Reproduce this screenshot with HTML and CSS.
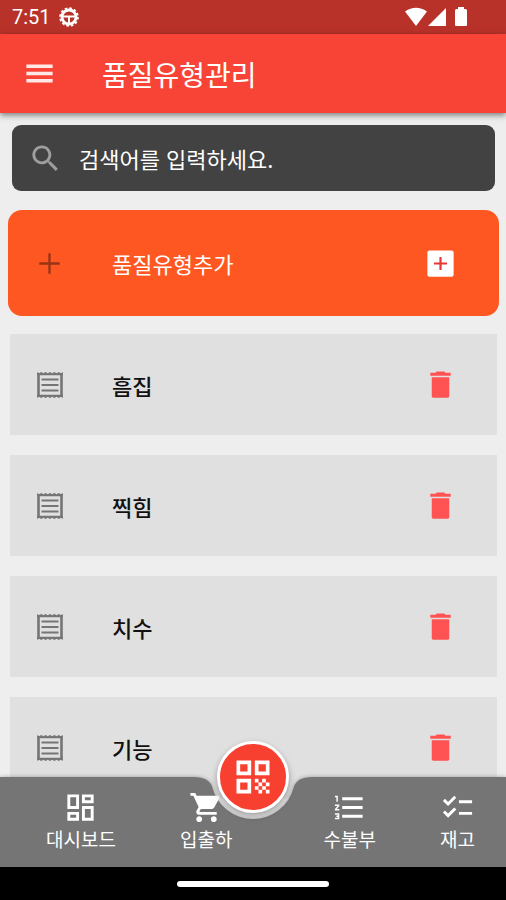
FILE: index.html
```html
<!DOCTYPE html>
<html lang="ko">
<head>
<meta charset="utf-8">
<meta name="viewport" content="width=device-width, initial-scale=1">
<title>품질유형관리</title>
<link rel="stylesheet" href="styles.css">
</head>
<body>
<svg class="defs" aria-hidden="true">
  <symbol id="receipt" viewBox="0 0 26 28">
    <path d="M1.500 2V26M24.500 2V26" fill="none" stroke="currentColor" stroke-width="2.600"/>
    <path d="M0.200 1l2 1.200 2-1.200 2.200 1.200L8.600 1l2.200 1.200L13 1l2.200 1.200L17.400 1l2.200 1.200L21.800 1l2 1.200L25.800 1v3.300H.2zM.2 27l2-1.200 2 1.200 2.200-1.200L8.600 27l2.200-1.200L13 27l2.200-1.200L17.400 27l2.200-1.200L21.800 27l2-1.200L25.800 27v-3.300H.2z"/>
    <path d="M4.500 8.500h17M4.500 14h17M4.500 19.500h17" fill="none" stroke="currentColor" stroke-width="2.200"/>
  </symbol>
  <symbol id="trash" viewBox="0 0 24 24">
    <path d="M6 20c0 .6.400 1 1 1h10c.6 0 1-.4 1-1V7H6v13zM19 4h-3.500l-1-1h-5l-1 1H5v2h14V4z"/>
  </symbol>
</svg>
<div class="screen">
  <div class="status">
    <span class="time">7:51</span>
    <svg class="wheel" viewBox="0 0 20 20" aria-hidden="true">
      <circle cx="10" cy="10" r="7" fill="none" stroke="currentColor" stroke-width="2.800"/>
      <circle cx="10" cy="10" r="8.900" fill="none" stroke="currentColor" stroke-width="1.800" stroke-dasharray="2.660 2"/>
      <path d="M3 9.500h14M10 10v7" stroke="currentColor" stroke-width="2"/>
    </svg>
    <svg class="signals" viewBox="0 0 66 20" aria-hidden="true">
      <path d="M1 4.500Q12 -3 23 4.500L12 19zM24 19L42 1V19zM51 3.500q0-1.500 1.500-1.500H54V0h6v2h1.500q1.500 0 1.500 1.500V18q0 1-1 1H52q-1 0-1-1z"/>
    </svg>
  </div>
  <header class="appbar">
    <button class="icon-btn" type="button" aria-label="메뉴"><svg class="icon" viewBox="0 0 24 24"><path d="M3 18.200h18v-2.400H3v2.400zm0-5h18v-2.400H3v2.400zm0-7.400v2.400h18V5.800H3z"/></svg></button>
    <h1>품질유형관리</h1>
  </header>
  <main>
    <label class="search">
      <svg class="icon" viewBox="0 0 24 24" aria-hidden="true"><path d="M15.500 14h-.79l-.28-.27C15.410 12.590 16 11.110 16 9.500 16 5.910 13.090 3 9.500 3S3 5.910 3 9.500 5.910 16 9.500 16c1.610 0 3.090-.59 4.230-1.570l.27.28v.79l5 4.990L20.490 19l-4.990-5zm-6 0C7.010 14 5 11.990 5 9.500S7.010 5 9.500 5 14 7.010 14 9.500 11.990 14 9.500 14z"/></svg>
      <input type="text" placeholder="검색어를 입력하세요." aria-label="검색어">
    </label>
    <button class="add" type="button">
      <svg class="icon lead" viewBox="0 0 24 24" aria-hidden="true"><path d="M19 12.800h-6.200V19h-1.600v-6.200H5v-1.600h6.200V5h1.600v6.200H19z"/></svg>
      <span class="name">품질유형추가</span>
      <svg class="icon" viewBox="0 0 24 24" aria-hidden="true"><rect x="3" y="3" width="18" height="18" rx="1.500"/><path class="plus" d="M7.500 12h9M12 7.500v9"/></svg>
    </button>
    <ul class="list">
      <li class="row"><svg class="receipt" aria-hidden="true"><use href="#receipt"/></svg><span class="name">흠집</span><button class="icon-btn delete" type="button" aria-label="흠집 삭제"><svg class="icon"><use href="#trash"/></svg></button></li>
      <li class="row"><svg class="receipt" aria-hidden="true"><use href="#receipt"/></svg><span class="name">찍힘</span><button class="icon-btn delete" type="button" aria-label="찍힘 삭제"><svg class="icon"><use href="#trash"/></svg></button></li>
      <li class="row"><svg class="receipt" aria-hidden="true"><use href="#receipt"/></svg><span class="name">치수</span><button class="icon-btn delete" type="button" aria-label="치수 삭제"><svg class="icon"><use href="#trash"/></svg></button></li>
      <li class="row"><svg class="receipt" aria-hidden="true"><use href="#receipt"/></svg><span class="name">기능</span><button class="icon-btn delete" type="button" aria-label="기능 삭제"><svg class="icon"><use href="#trash"/></svg></button></li>
    </ul>
  </main>
  <nav class="bottom">
    <div class="backdrop">
      <div class="fill"></div>
      <svg class="notch" viewBox="0 0 118 90" aria-hidden="true"><path d="M0 0Q15 0 18.200 10A42 42 0 0 0 99.800 10Q103 0 118 0V90H0z"/></svg>
      <div class="fill"></div>
    </div>
    <div class="group">
      <a href="#dashboard"><svg class="icon" viewBox="0 0 24 24" aria-hidden="true"><path d="M19 5v2h-4V5h4M9 5v6H5V5h4m10 8v6h-4v-6h4M9 17v2H5v-2h4M21 3h-8v6h8V3zM11 3H3v10h8V3zm10 8h-8v10h8V11zm-10 4H3v6h8v-6z"/></svg>대시보드</a>
      <a href="#inout"><svg class="icon" viewBox="0 0 24 24" aria-hidden="true"><path d="M7 18c-1.100 0-1.990.9-1.990 2S5.900 22 7 22s2-.9 2-2-.9-2-2-2zM1 2v2h2l3.600 7.590-1.350 2.450c-.16.28-.25.61-.25.96 0 1.100.9 2 2 2h12v-2H7.420c-.14 0-.25-.11-.25-.25l.03-.12.9-1.630h7.450c.75 0 1.410-.41 1.750-1.030l3.580-6.490c.08-.14.12-.31.12-.48 0-.55-.45-1-1-1H5.210l-.94-2H1zm16 16c-1.100 0-1.990.9-1.990 2s.89 2 1.990 2 2-.9 2-2-.9-2-2-2z"/></svg>입출하</a>
    </div>
    <div class="group">
      <a href="#ledger"><svg class="icon" viewBox="0 0 24 24" aria-hidden="true"><path d="M2 17h2v.5H3v1h1v.5H2v1h3v-4H2v1zm1-9h1V4H2v1h1v3zm-1 3h1.800L2 13.100v.9h3v-1H3.200L5 10.900V10H2v1zm5-6v2h14V5H7zm0 14h14v-2H7v2zm0-6h14v-2H7v2z"/></svg>수불부</a>
      <a href="#stock"><svg class="icon" viewBox="0 0 24 24" aria-hidden="true"><path d="M22 7h-9v2h9V7zm0 8h-9v2h9v-2zM5.540 11L2 7.460l1.410-1.410 2.120 2.120 4.240-4.240 1.410 1.410L5.540 11zm0 8L2 15.460l1.410-1.410 2.120 2.120 4.240-4.240 1.410 1.410L5.540 19z"/></svg>재고</a>
    </div>
    <button class="fab" type="button" aria-label="QR 스캔"><svg viewBox="0 0 24 24"><path d="M3 11h8V3H3v8zm2-6h4v4H5V5zM3 21h8v-8H3v8zm2-6h4v4H5v-4zM13 3v8h8V3h-8zm6 6h-4V5h4v4zM19 19h2v2h-2zM13 13h2v2h-2zM15 15h2v2h-2zM13 17h2v2h-2zM15 19h2v2h-2zM17 17h2v2h-2zM17 13h2v2h-2zM19 15h2v2h-2z"/></svg></button>
  </nav>
  <div class="gesture"><span></span></div>
</div>
</body>
</html>
```
FILE: styles.css
```css
* { box-sizing: border-box; }
body { margin: 0; background: #eee; font-family: "Noto Sans CJK KR", sans-serif; }
button { border: 0; padding: 0; background: none; color: inherit; font: inherit; cursor: pointer; }
svg { display: block; fill: currentColor; flex: none; }
.defs { display: none; }
.screen { display: flex; flex-direction: column; height: 100vh; overflow: hidden; }
.icon { width: 35px; height: 35px; }

.status { display: flex; align-items: center; flex: none; height: 34px; padding: 0 36px 0 12px; background: #b93229; color: #fff; }
.time { font: 20px Roboto, sans-serif; }
.wheel { width: 20px; height: 20px; margin-left: 8px; }
.signals { width: 66px; height: 20px; margin-left: auto; }

.appbar { display: flex; align-items: center; flex: none; gap: 45px; height: 79px; padding: 0 22px; background: #f84437; color: #fff; box-shadow: 0 2px 6px rgba(0, 0, 0, .5); z-index: 1; }
.appbar .icon { color: #ffe9e7; }
.icon-btn { flex: none; }
h1 { margin: 0; font-size: 28px; font-weight: 400; line-height: 40px; }

main { flex: 1; min-height: 0; overflow: hidden; padding: 12px 7px 0 8px; }
.search { display: flex; align-items: center; gap: 16px; height: 66px; margin: 0 4px; padding: 0 16px; border-radius: 9px; background: #424242; color: #9e9e9e; }
.search input { flex: 1; min-width: 0; border: 0; padding: 0; outline: 0; background: none; color: #fff; font: 22px "Noto Sans CJK KR", sans-serif; }
.search input::placeholder { color: #fff; opacity: 1; }
.add { display: flex; align-items: center; width: 100%; height: 106px; margin-top: 19px; padding: 0 41px 0 24px; border-radius: 14px; background: #ff5722; color: #fff; font-size: 22px; text-align: left; }
.lead { color: #993414; }
.plus { stroke: #e53935; stroke-width: 1.500; }
.name { flex: 1; padding-left: 45px; }
.list { display: flex; flex-direction: column; gap: 20px; margin: 18px 2px 0; padding: 0; list-style: none; }
.row { display: flex; align-items: center; flex: none; height: 101px; padding: 0 39px 0 27px; background: #e0e0e0; color: #111; font-size: 22px; font-weight: 500; }
.row .name { padding-left: 49px; }
.receipt { width: 26px; height: 28px; color: #757575; }
.delete { color: #ff5252; }

.bottom { position: relative; display: flex; justify-content: space-between; flex: none; height: 90px; margin-top: -90px; padding: 13px 31px 0 46px; z-index: 2; }
.backdrop { position: absolute; inset: 0; display: flex; color: #757575; filter: drop-shadow(0 0 2px rgba(0, 0, 0, .3)); }
.fill { flex: 1; background: #757575; }
.notch { width: 118px; height: 90px; }
.group { position: relative; display: flex; gap: 64px; }
.group a { display: flex; flex-direction: column; align-items: center; color: #fff; font-size: 19px; line-height: 28px; text-decoration: none; }
.fab { position: absolute; left: 50%; top: 0; display: grid; place-items: center; width: 72px; height: 72px; border: 3px solid #fff; border-radius: 50%; transform: translate(-50%, -50%); background: #f84030; color: #fff; box-shadow: 0 3px 6px rgba(0, 0, 0, .35); }
.fab svg { width: 44px; height: 44px; }
.gesture { display: grid; place-items: center; flex: none; height: 33px; background: #000; z-index: 2; }
.gesture span { width: 30%; height: 6px; border-radius: 3px; background: #fff; }
```
